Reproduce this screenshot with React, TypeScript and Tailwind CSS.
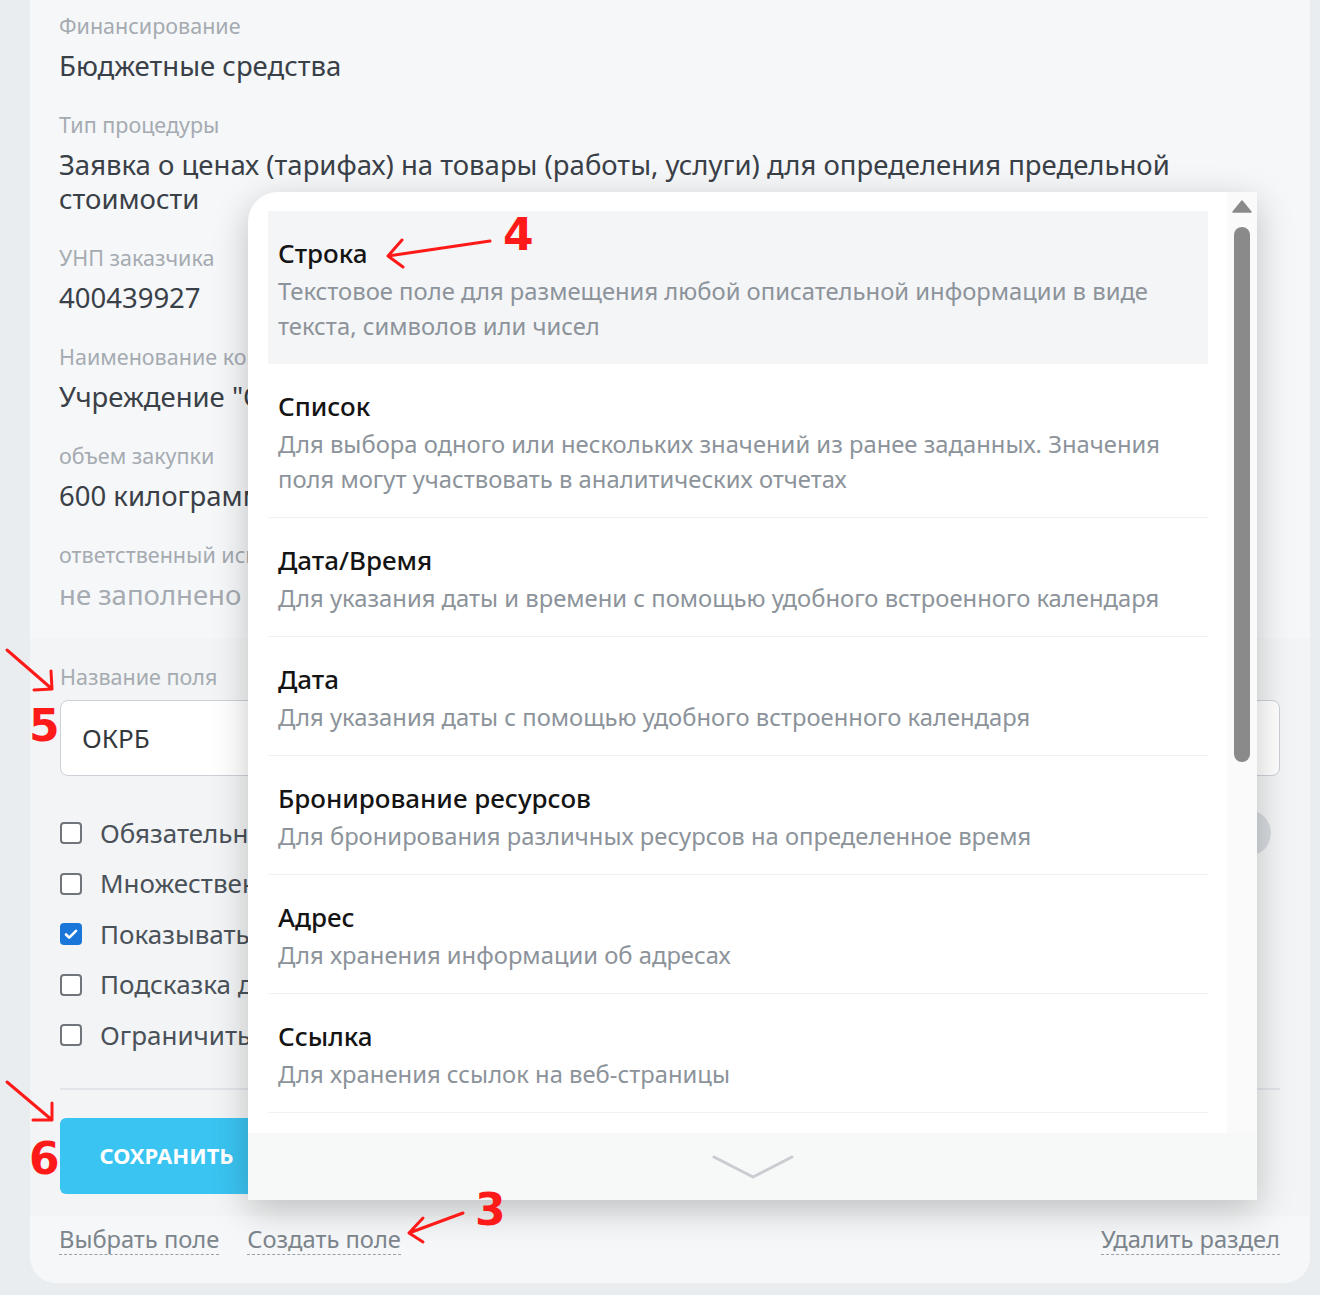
import React from "react";

type Field = {
  label: string;
  value: string;
  empty?: boolean;
};

type FieldType = {
  title: string;
  description: string;
};

const fields: Field[] = [
  { label: "Финансирование", value: "Бюджетные средства" },
  {
    label: "Тип процедуры",
    value:
      "Заявка о ценах (тарифах) на товары (работы, услуги) для определения предельной стоимости",
  },
  { label: "УНП заказчика", value: "400439927" },
  { label: "Наименование компании", value: 'Учреждение "Областной центр"' },
  { label: "объем закупки", value: "600 килограммов" },
  { label: "ответственный исполнитель", value: "не заполнено", empty: true },
];

const options = [
  { label: "Обязательное поле", checked: false },
  { label: "Множественное значение", checked: false },
  { label: "Показывать в карточке", checked: true },
  { label: "Подсказка для поля", checked: false },
  { label: "Ограничить доступ", checked: false },
];

const fieldTypes: FieldType[] = [
  {
    title: "Строка",
    description:
      "Текстовое поле для размещения любой описательной информации в виде текста, символов или чисел",
  },
  {
    title: "Список",
    description:
      "Для выбора одного или нескольких значений из ранее заданных. Значения поля могут участвовать в аналитических отчетах",
  },
  {
    title: "Дата/Время",
    description: "Для указания даты и времени с помощью удобного встроенного календаря",
  },
  { title: "Дата", description: "Для указания даты с помощью удобного встроенного календаря" },
  {
    title: "Бронирование ресурсов",
    description: "Для бронирования различных ресурсов на определенное время",
  },
  { title: "Адрес", description: "Для хранения информации об адресах" },
  { title: "Ссылка", description: "Для хранения ссылок на веб-страницы" },
  { title: "Число", description: "Для хранения числовых значений" },
];

const Checkbox: React.FC<{ checked: boolean }> = ({ checked }) =>
  checked ? (
    <span className="flex h-[22px] w-[22px] shrink-0 items-center justify-center rounded-[4px] bg-[#1a77d9]">
      <svg width="16" height="16" viewBox="0 0 16 16" fill="none">
        <path d="M3 8.5l3.2 3.2L13 4.8" stroke="white" strokeWidth="2.6" strokeLinecap="round" strokeLinejoin="round" />
      </svg>
    </span>
  ) : (
    <span className="h-[22px] w-[22px] shrink-0 rounded-[4px] border-2 border-[#6f757b] bg-white" />
  );

const Annotations = () => (
  <svg className="pointer-events-none absolute left-0 top-0" width="1320" height="1295" viewBox="0 0 1320 1295" fill="none">
    <g stroke="#ff1a1a" strokeWidth="3" strokeLinecap="round" strokeLinejoin="round">
      <path d="M490 241L388 256M402 240L388 256L403 267" />
      <path d="M7 650L52 689M34 690L52 689L51 671" />
      <path d="M7 1082L52 1120M33 1120L52 1120L52 1103" />
      <path d="M463 1213L409 1233M423 1218L409 1233L423 1242" />
    </g>
    <g fill="#ff1a1a" fontFamily="'DejaVu Sans', sans-serif" fontWeight="700" fontSize="44">
      <text x="503" y="250">4</text>
      <text x="29" y="741">5</text>
      <text x="29" y="1174">6</text>
      <text x="475" y="1225">3</text>
    </g>
  </svg>
);

const FieldTypeMenu = () => (
  <div className="absolute left-[248px] top-[192px] flex h-[1008px] w-[1009px] flex-col overflow-hidden rounded-tl-[30px] bg-white shadow-[0_10px_36px_rgba(0,0,0,0.22)]">
    <div className="flex min-h-0 flex-1">
      <div className="min-w-0 flex-1 overflow-hidden pl-[20px] pr-[19px] pt-[19px]">
        {fieldTypes.map((item, i) => (
          <div
            key={item.title}
            className={
              i === 0
                ? "bg-[#f4f5f7] px-[10px] pb-[20px] pt-[25px]"
                : "border-b border-[#eff1f3] px-[10px] pb-[20px] pt-[25px]"
            }
          >
            <div className="text-[26px] font-medium leading-[34px] text-[#141414]">{item.title}</div>
            <div className="mt-[4px] text-[23.8px] leading-[35px] text-[#8c939a]">{item.description}</div>
          </div>
        ))}
      </div>
      <div className="flex w-[30px] shrink-0 flex-col items-center bg-[#fafafa] pt-[8px]">
        <svg width="20" height="13" viewBox="0 0 20 13">
          <path d="M10 1L19 12H1Z" fill="#8a8a8a" stroke="#8a8a8a" strokeWidth="1.5" strokeLinejoin="round" />
        </svg>
        <div className="mt-[14px] h-[535px] w-[16px] rounded-full bg-[#8a8a8a]" />
      </div>
    </div>
    <div className="flex h-[67px] shrink-0 items-center justify-center bg-[#f7f8f8]">
      <svg width="84" height="28" viewBox="0 0 84 28" fill="none">
        <path d="M3 4L42 24L81 4" stroke="#c9cdd2" strokeWidth="3" strokeLinecap="round" strokeLinejoin="round" />
      </svg>
    </div>
  </div>
);

export default function App() {
  return (
    <div className="relative min-h-[1295px] bg-[#eaedf0] pb-[13px] pl-[30px] pr-[10px] font-['Noto_Sans',sans-serif]">
      <div className="overflow-hidden rounded-b-[26px] bg-[#f5f7f9]">
        <section className="px-[29px] pb-[26px] pt-[13px]">
          {fields.map((f, i) => (
            <div key={f.label} className={i > 0 ? "mt-[29px]" : ""}>
              <div className="whitespace-nowrap text-[21.5px] leading-[26px] text-[#a5abb1]">{f.label}</div>
              <div
                className={
                  f.empty
                    ? "mt-[10px] text-[27.5px] leading-[34px] text-[#a5abb1]"
                    : "mt-[10px] text-[27.5px] leading-[34px] text-[#3a4047]"
                }
              >
                {f.value}
              </div>
            </div>
          ))}
        </section>

        <section className="bg-[#f3f4f5] px-[30px] pb-[22px] pt-[26px]">
          <div className="text-[21.5px] leading-[26px] text-[#a5abb1]">Название поля</div>
          <div className="mt-[10px] flex h-[76px] items-center rounded-[8px] border border-[#cbd1d7] bg-white pl-[21px] text-[26px] text-[#33383d]">
            ОКРБ
          </div>
          <div className="mt-[32px]">
            {options.map((o, i) => (
              <div key={o.label} className="flex h-[50.5px] items-center gap-[18px]">
                <Checkbox checked={o.checked} />
                <span className="flex-1 text-[26px] text-[#4a5159]">{o.label}</span>
                {i === 0 && <span className="mr-[9px] h-[46px] w-[46px] rounded-full bg-[#d6dade]" />}
              </div>
            ))}
          </div>
          <div className="mt-[27px] h-[2px] bg-[#e1e5e9]" />
          <button className="mt-[28px] h-[76px] w-[213px] rounded-[6px] bg-[#3ac4f1] text-[22px] font-bold uppercase text-white">
            Сохранить
          </button>
        </section>

        <footer className="flex h-[67px] items-start gap-[28px] px-[29px] pt-[8px] text-[23.7px] leading-[30px] text-[#7d858c]">
          <span className="border-b border-dashed border-[#9aa1a8]">Выбрать поле</span>
          <span className="border-b border-dashed border-[#9aa1a8]">Создать поле</span>
          <span className="ml-auto mr-[1px] border-b border-dashed border-[#9aa1a8]">Удалить раздел</span>
        </footer>
      </div>

      <FieldTypeMenu />
      <Annotations />
    </div>
  );
}
